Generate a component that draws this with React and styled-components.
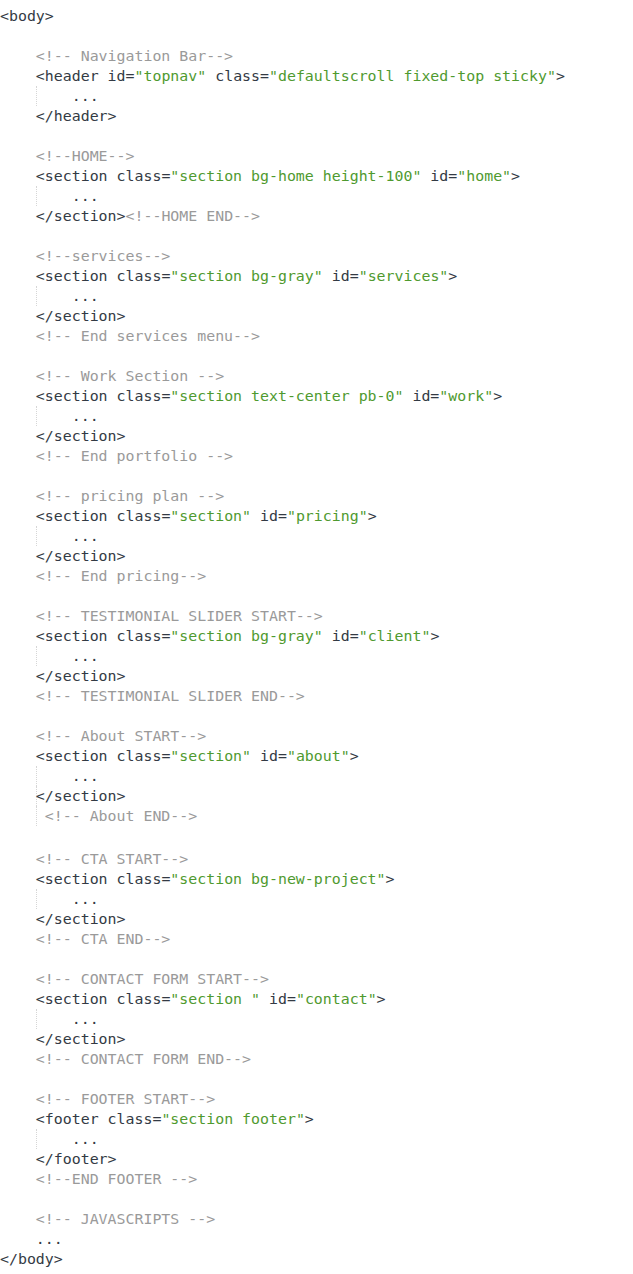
import React from 'react';
import styled, { createGlobalStyle } from 'styled-components';

const GlobalStyle = createGlobalStyle`
  html, body {
    margin: 0;
    padding: 0;
    background: #ffffff;
  }
`;

const Listing = styled.pre`
  margin: 0;
  padding: 6px 0 0 0;
  font-family: 'DejaVu Sans Mono', 'Liberation Mono', monospace;
  font-size: 14.9px;
  line-height: 20px;
  color: #333a44;
  white-space: pre;
`;

const Line = styled.div`
  height: 20px;
  position: relative;
  padding-left: ${({ indent }) => indent}ch;
  margin-top: ${({ shift }) => shift || 0}px;

  &::before {
    content: '';
    display: ${({ guide }) => (guide ? 'block' : 'none')};
    position: absolute;
    left: 36px;
    top: 0;
    bottom: 0;
    border-left: 1px dotted #d6d6d6;
  }
`;

const Str = styled.span`
  color: #4f9a2f;
`;

const Comment = styled.span`
  color: #9a9a9a;
`;

const open = (tag, attrs) => (
  <>
    {'<' + tag}
    {attrs.map(([name, value]) => (
      <React.Fragment key={name}>
        {' ' + name + '='}
        <Str>"{value}"</Str>
      </React.Fragment>
    ))}
    {'>'}
  </>
);

const lines = [
  { indent: 0, body: '<body>' },
  { indent: 0, body: '' },
  { indent: 4, body: <Comment>{'<!-- Navigation Bar-->'}</Comment> },
  { indent: 4, body: open('header', [['id', 'topnav'], ['class', 'defaultscroll fixed-top sticky']]) },
  { indent: 8, body: '...', guide: true },
  { indent: 4, body: '</header>' },
  { indent: 0, body: '' },
  { indent: 4, body: <Comment>{'<!--HOME-->'}</Comment> },
  { indent: 4, body: open('section', [['class', 'section bg-home height-100'], ['id', 'home']]) },
  { indent: 8, body: '...', guide: true },
  { indent: 4, body: <>{'</section>'}<Comment>{'<!--HOME END-->'}</Comment></> },
  { indent: 0, body: '' },
  { indent: 4, body: <Comment>{'<!--services-->'}</Comment> },
  { indent: 4, body: open('section', [['class', 'section bg-gray'], ['id', 'services']]) },
  { indent: 8, body: '...', guide: true },
  { indent: 4, body: '</section>' },
  { indent: 4, body: <Comment>{'<!-- End services menu-->'}</Comment> },
  { indent: 0, body: '' },
  { indent: 4, body: <Comment>{'<!-- Work Section -->'}</Comment> },
  { indent: 4, body: open('section', [['class', 'section text-center pb-0'], ['id', 'work']]) },
  { indent: 8, body: '...', guide: true },
  { indent: 4, body: '</section>' },
  { indent: 4, body: <Comment>{'<!-- End portfolio -->'}</Comment> },
  { indent: 0, body: '' },
  { indent: 4, body: <Comment>{'<!-- pricing plan -->'}</Comment> },
  { indent: 4, body: open('section', [['class', 'section'], ['id', 'pricing']]) },
  { indent: 8, body: '...', guide: true },
  { indent: 4, body: '</section>' },
  { indent: 4, body: <Comment>{'<!-- End pricing-->'}</Comment> },
  { indent: 0, body: '' },
  { indent: 4, body: <Comment>{'<!-- TESTIMONIAL SLIDER START-->'}</Comment> },
  { indent: 4, body: open('section', [['class', 'section bg-gray'], ['id', 'client']]) },
  { indent: 8, body: '...', guide: true },
  { indent: 4, body: '</section>' },
  { indent: 4, body: <Comment>{'<!-- TESTIMONIAL SLIDER END-->'}</Comment> },
  { indent: 0, body: '' },
  { indent: 4, body: <Comment>{'<!-- About START-->'}</Comment> },
  { indent: 4, body: open('section', [['class', 'section'], ['id', 'about']]) },
  { indent: 8, body: '...', guide: true },
  { indent: 4, body: '</section>', guide: true },
  { indent: 5, body: <Comment>{'<!-- About END-->'}</Comment>, guide: true },
  { indent: 0, body: '' },
  { indent: 4, body: <Comment>{'<!-- CTA START-->'}</Comment>, shift: 3 },
  { indent: 4, body: open('section', [['class', 'section bg-new-project']]) },
  { indent: 8, body: '...', guide: true },
  { indent: 4, body: '</section>' },
  { indent: 4, body: <Comment>{'<!-- CTA END-->'}</Comment> },
  { indent: 0, body: '' },
  { indent: 4, body: <Comment>{'<!-- CONTACT FORM START-->'}</Comment> },
  { indent: 4, body: open('section', [['class', 'section '], ['id', 'contact']]) },
  { indent: 8, body: '...', guide: true },
  { indent: 4, body: '</section>' },
  { indent: 4, body: <Comment>{'<!-- CONTACT FORM END-->'}</Comment> },
  { indent: 0, body: '' },
  { indent: 4, body: <Comment>{'<!-- FOOTER START-->'}</Comment> },
  { indent: 4, body: open('footer', [['class', 'section footer']]) },
  { indent: 8, body: '...', guide: true },
  { indent: 4, body: '</footer>' },
  { indent: 4, body: <Comment>{'<!--END FOOTER -->'}</Comment> },
  { indent: 0, body: '' },
  { indent: 4, body: <Comment>{'<!-- JAVASCRIPTS -->'}</Comment> },
  { indent: 4, body: '...' },
  { indent: 0, body: '</body>' },
];

const App = () => (
  <>
    <GlobalStyle />
    <Listing>
      {lines.map((line, i) => (
        <Line key={i} indent={line.indent} guide={line.guide} shift={line.shift}>
          {line.body}
        </Line>
      ))}
    </Listing>
  </>
);

export default App;
